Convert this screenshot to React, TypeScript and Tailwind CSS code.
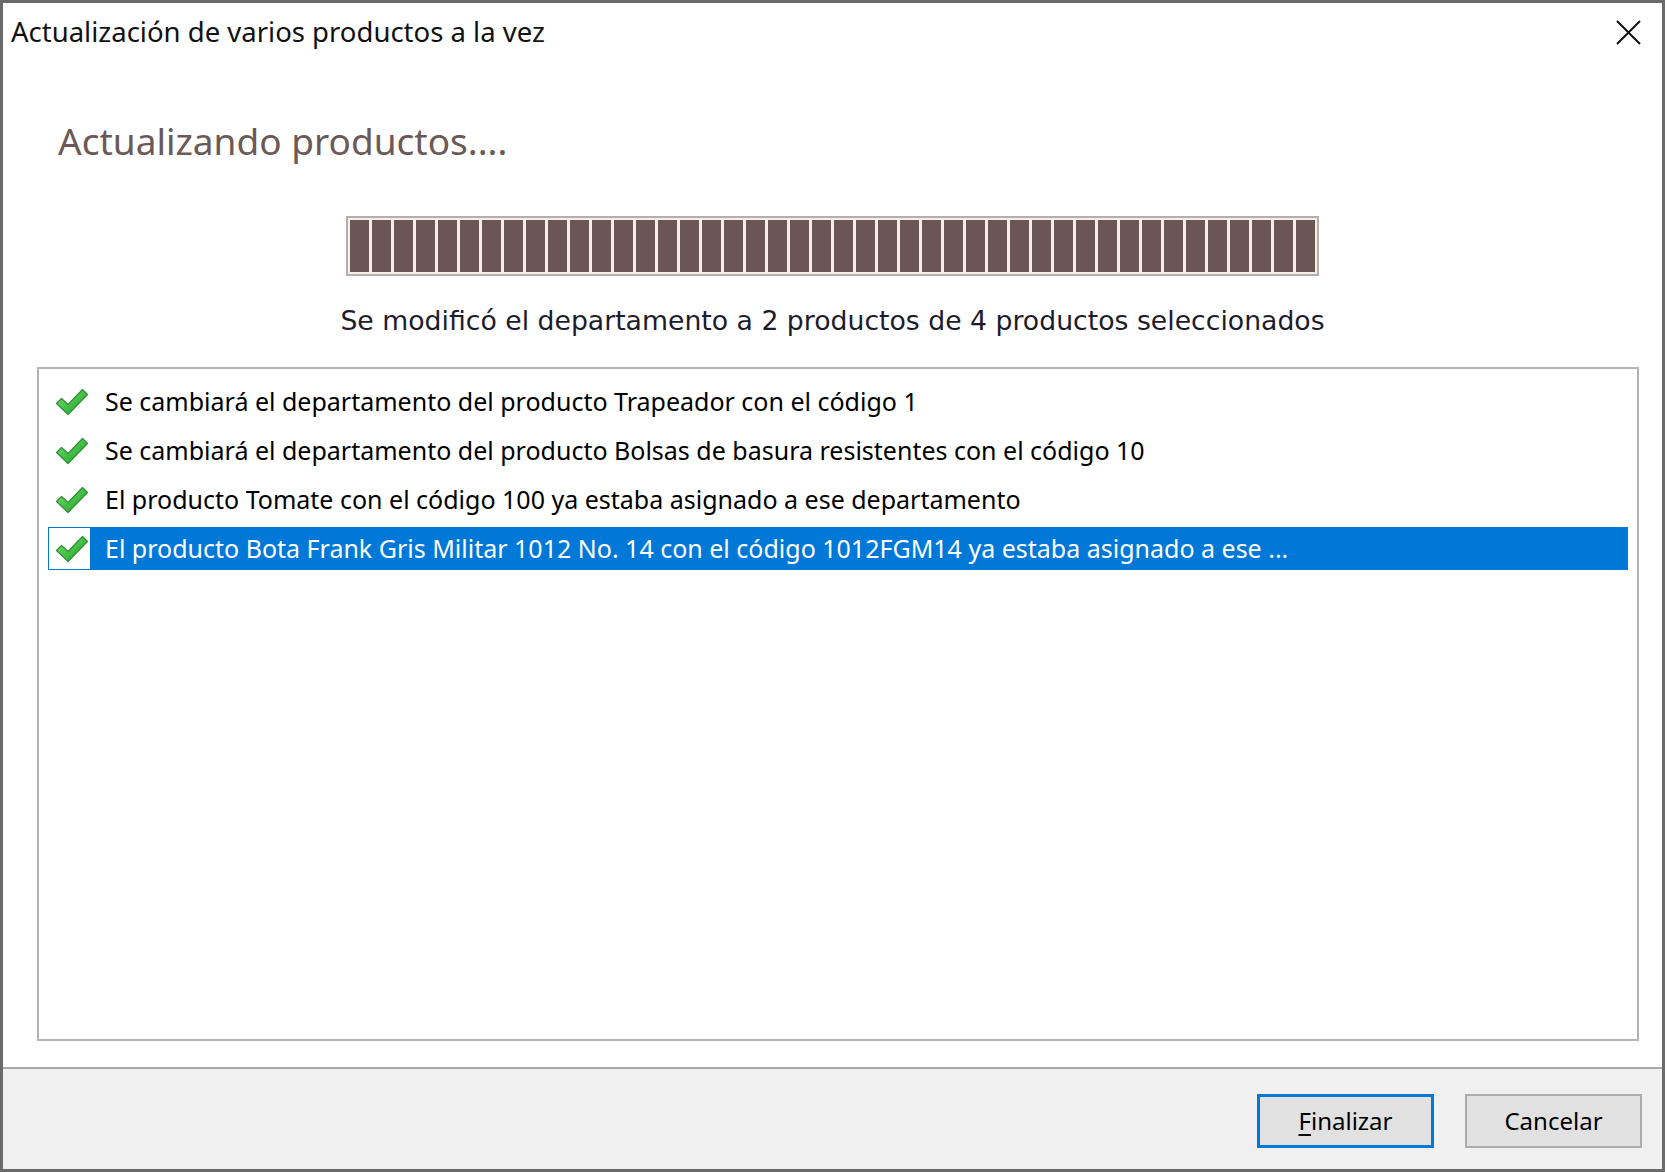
import React from "react";

const rows = [
  "Se cambiará el departamento del producto Trapeador con el código 1",
  "Se cambiará el departamento del producto Bolsas de basura resistentes con el código 10",
  "El producto Tomate con el código 100 ya estaba asignado a ese departamento",
  "El producto Bota Frank Gris Militar 1012 No. 14 con el código 1012FGM14 ya estaba asignado a ese ...",
];

function CheckIcon() {
  return (
    <svg width="34" height="28" viewBox="0 0 34 28">
      <defs>
        <linearGradient id="chk" x1="0" y1="0" x2="1" y2="1">
          <stop offset="0" stopColor="#7fe07a" />
          <stop offset="0.5" stopColor="#46c046" />
          <stop offset="1" stopColor="#249a2c" />
        </linearGradient>
      </defs>
      <path
        d="M1.5 15.5 L6.5 10.5 L13 16.5 L27.5 1.5 L32.5 6.5 L13 26.5 Z"
        fill="url(#chk)"
        stroke="#2f8f34"
        strokeWidth="1.2"
        strokeLinejoin="round"
      />
    </svg>
  );
}

function ProgressBar() {
  const segs = Array.from({ length: 44 });
  return (
    <div className="mx-auto mt-[53px] h-[60px] w-[973px] border-2 border-[#b6aeac] bg-[#f4eeec] p-[2px]">
      <div className="flex h-full gap-[3px]">
        {segs.map((_, i) => (
          <div key={i} className="h-full w-[19px] bg-[#6b5654]" />
        ))}
      </div>
    </div>
  );
}

export default function App() {
  return (
    <div className="h-[1172px] w-[1667px] bg-white pr-[2px]">
      <div className="flex h-full w-[1665px] flex-col border-[3px] border-[#6a6a6a] bg-white font-['Noto_Sans',sans-serif]">
        {/* title bar */}
        <div className="flex h-[58px] items-center justify-between pl-[8px] pr-[21px]">
          <span className="text-[27.5px] leading-none text-[#111]">
            Actualización de varios productos a la vez
          </span>
          <svg width="25" height="25" viewBox="0 0 25 25">
            <path d="M1 1 L24 24 M24 1 L1 24" stroke="#111" strokeWidth="2" />
          </svg>
        </div>

        <div className="ml-[55px] mt-[58px] h-[44px] text-[37px] leading-[44px] text-[#6a5957]">
          Actualizando productos....
        </div>

        <ProgressBar />

        <div className="mt-[30px] h-[30px] text-center font-['DejaVu_Sans',sans-serif] text-[26.7px] leading-[30px] text-[#1c1c2c]">
          Se modificó el departamento a 2 productos de 4 productos seleccionados
        </div>

        <div className="ml-[34px] mr-[23px] mt-[31px] h-[674px] border-2 border-[#b4b4b4] bg-white px-[9px] pt-[11px]">
          <div className="flex flex-col gap-[6px]">
            {rows.map((text, i) => {
              const selected = i === rows.length - 1;
              return (
                <div
                  key={i}
                  className={
                    selected
                      ? "flex h-[43px] items-center border border-[#0078d7]"
                      : "flex h-[43px] items-center border border-transparent"
                  }
                >
                  <div className="flex h-full w-[41px] items-center justify-end pr-[1px]">
                    <CheckIcon />
                  </div>
                  <div
                    className={
                      selected
                        ? "flex h-full flex-1 items-center bg-[#0078d7] pl-[15px] text-[25px] text-white"
                        : "flex h-full flex-1 items-center pl-[15px] text-[25px] text-black"
                    }
                  >
                    {text}
                  </div>
                </div>
              );
            })}
          </div>
        </div>

        {/* footer */}
        <div className="mt-[26px] flex flex-1 items-start justify-end gap-[31px] border-t-2 border-[#a8a8a8] bg-[#f0f0f0] pr-[20px] pt-[25px]">
          <button className="flex h-[54px] w-[177px] items-center justify-center border-[3px] border-[#0078d7] bg-[#e1e1e1] text-[24px] text-black">
            <span>
              <span className="underline underline-offset-4">F</span>inalizar
            </span>
          </button>
          <button className="flex h-[54px] w-[177px] items-center justify-center border-2 border-[#adadad] bg-[#e1e1e1] text-[24px] text-black">
            Cancelar
          </button>
        </div>
      </div>
    </div>
  );
}
